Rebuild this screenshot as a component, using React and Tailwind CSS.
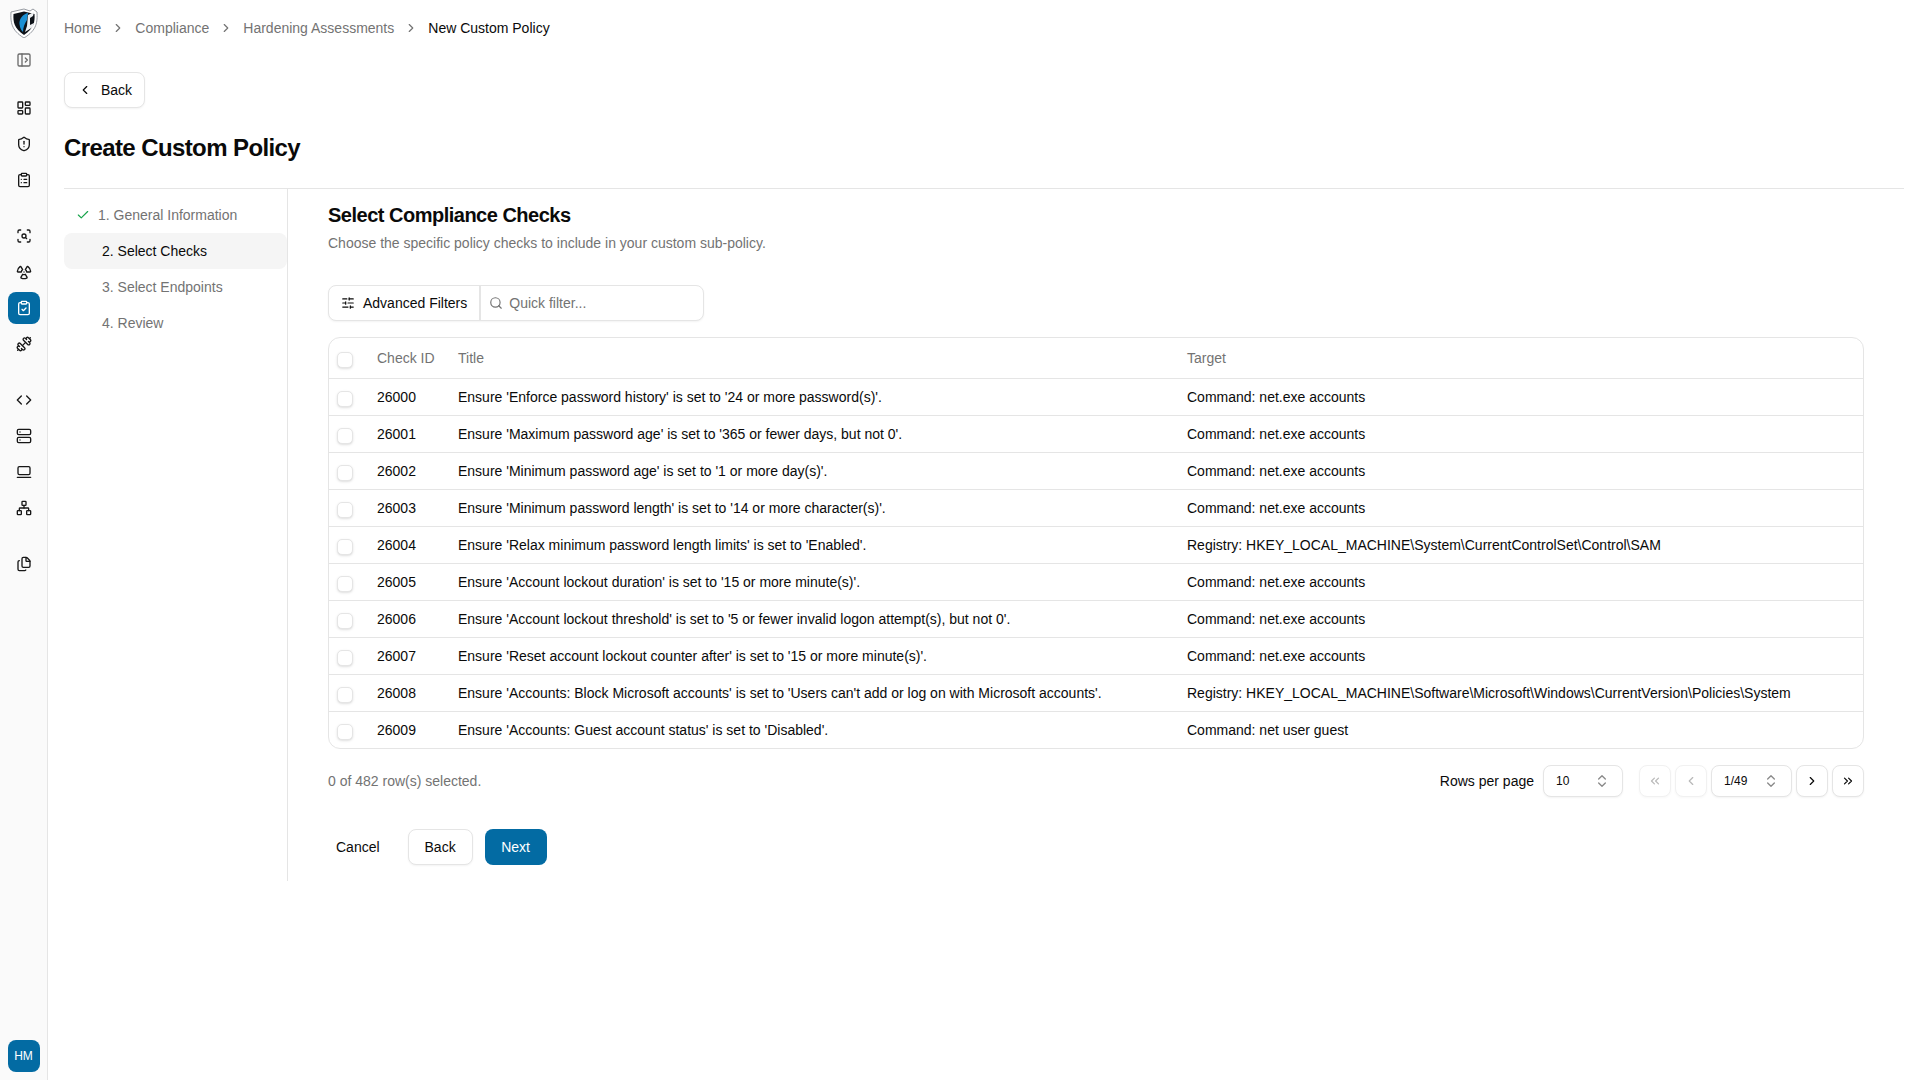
import React from "react";
import {
  Check,
  ChevronLeft,
  ChevronRight,
  ChevronsLeft,
  ChevronsRight,
  ChevronsUpDown,
  ClipboardCheck,
  ClipboardList,
  Code,
  Dumbbell,
  Files,
  LaptopMinimal,
  LayoutDashboard,
  Network,
  PanelLeftOpen,
  Radiation,
  ScanSearch,
  Search,
  Server,
  ShieldAlert,
  SlidersHorizontal,
} from "lucide-react";

const checks = [
  ["26000", "Ensure 'Enforce password history' is set to '24 or more password(s)'.", "Command: net.exe accounts"],
  ["26001", "Ensure 'Maximum password age' is set to '365 or fewer days, but not 0'.", "Command: net.exe accounts"],
  ["26002", "Ensure 'Minimum password age' is set to '1 or more day(s)'.", "Command: net.exe accounts"],
  ["26003", "Ensure 'Minimum password length' is set to '14 or more character(s)'.", "Command: net.exe accounts"],
  ["26004", "Ensure 'Relax minimum password length limits' is set to 'Enabled'.", "Registry: HKEY_LOCAL_MACHINE\\System\\CurrentControlSet\\Control\\SAM"],
  ["26005", "Ensure 'Account lockout duration' is set to '15 or more minute(s)'.", "Command: net.exe accounts"],
  ["26006", "Ensure 'Account lockout threshold' is set to '5 or fewer invalid logon attempt(s), but not 0'.", "Command: net.exe accounts"],
  ["26007", "Ensure 'Reset account lockout counter after' is set to '15 or more minute(s)'.", "Command: net.exe accounts"],
  ["26008", "Ensure 'Accounts: Block Microsoft accounts' is set to 'Users can't add or log on with Microsoft accounts'.", "Registry: HKEY_LOCAL_MACHINE\\Software\\Microsoft\\Windows\\CurrentVersion\\Policies\\System"],
  ["26009", "Ensure 'Accounts: Guest account status' is set to 'Disabled'.", "Command: net user guest"],
];

const Logo = () => (
  <svg width="28" height="30" viewBox="0 0 28 30">
    <path d="M1 4 L14 1 L20 3 L23 1 L27 4 C27.5 14 27 22 14 30 C1 22 .5 14 1 4 Z" fill="#fff" stroke="#7c828a" strokeWidth=".8" />
    <path d="M3.5 6 L14 3.5 L24.5 6 C25 14 24 20.5 14 27 C4 20.5 3 14 3.5 6 Z" fill="#0d1218" />
    <path d="M18 5 C13 6 9 11 9.5 16 C10 20 11 22 13 24 C13 19 15 15 17 12 Z" fill="#1b8fd2" />
    <path d="M18 7 L24 4 L23 8 L20 10 L20 17 L24 15 L23 19 L15 24 L17 18 Z" fill="#eef0f2" />
  </svg>
);

const NavIcon = ({ icon: Icon, active, className }) => (
  <div className={`flex size-8 items-center justify-center rounded-lg ${active ? "bg-[#036ba3] text-white" : "text-[#171717]"} ${className || ""}`}>
    <Icon size={16} strokeWidth={2} />
  </div>
);

const Sidebar = () => (
  <aside className="flex min-h-[1080px] w-12 shrink-0 flex-col items-center border-r border-[#e5e5e5] bg-[#fafafa] pt-2 pb-2">
    <Logo />
    <div className="mt-[6px] flex size-8 items-center justify-center text-[#6b6b6b]">
      <PanelLeftOpen size={16} />
    </div>
    <div className="mt-4 flex flex-col gap-1">
      <NavIcon icon={LayoutDashboard} />
      <NavIcon icon={ShieldAlert} />
      <NavIcon icon={ClipboardList} />
    </div>
    <div className="mt-6 flex flex-col gap-1">
      <NavIcon icon={ScanSearch} />
      <NavIcon icon={Radiation} />
      <NavIcon icon={ClipboardCheck} active />
      <NavIcon icon={Dumbbell} />
    </div>
    <div className="mt-6 flex flex-col gap-1">
      <NavIcon icon={Code} />
      <NavIcon icon={Server} />
      <NavIcon icon={LaptopMinimal} />
      <NavIcon icon={Network} />
    </div>
    <NavIcon icon={Files} className="mt-6" />
    <div className="mt-auto flex size-8 items-center justify-center rounded-lg bg-[#036ba3] text-xs text-white">HM</div>
  </aside>
);

const Breadcrumbs = () => (
  <div className="flex h-14 items-center gap-[10px] text-sm text-[#737373]">
    <span>Home</span>
    <ChevronRight size={14} />
    <span>Compliance</span>
    <ChevronRight size={14} />
    <span>Hardening Assessments</span>
    <ChevronRight size={14} />
    <span className="text-[#0a0a0a]">New Custom Policy</span>
  </div>
);

const Steps = () => (
  <nav className="flex w-[224px] shrink-0 flex-col border-r border-[#e5e5e5] pt-2 text-sm text-[#737373]">
    <div className="flex h-9 items-center pl-3">
      <Check size={14} className="mr-2 text-[#16a34a]" />
      1. General Information
    </div>
    <div className="flex h-9 items-center rounded-lg bg-[#f5f5f5] pl-[38px] text-[#0a0a0a]">2. Select Checks</div>
    <div className="flex h-9 items-center pl-[38px]">3. Select Endpoints</div>
    <div className="flex h-9 items-center pl-[38px]">4. Review</div>
  </nav>
);

const Checkbox = () => (
  <div className="size-4 translate-y-[2px] rounded-[5px] border border-[#e5e5e5] bg-white shadow-sm" />
);

const PageButton = ({ icon: Icon, disabled }) => (
  <button type="button" className={`flex size-8 items-center justify-center rounded-lg border border-[#e5e5e5] bg-white shadow-xs ${disabled ? "text-[#737373] opacity-50" : "text-[#0a0a0a]"}`}>
    <Icon size={14} />
  </button>
);

const SelectBox = ({ value, className }) => (
  <div className={`flex h-8 items-center justify-between rounded-lg border border-[#e5e5e5] bg-white px-3 text-xs shadow-xs ${className}`}>
    {value}
    <ChevronsUpDown size={16} className="text-[#8a8a8a]" />
  </div>
);

const ChecksTable = () => (
  <div className="mt-4 overflow-hidden rounded-xl border border-[#e5e5e5]">
    <table className="w-full table-fixed border-collapse text-sm text-[#0a0a0a]">
      <colgroup>
        <col className="w-[48px]" />
        <col className="w-[81px]" />
        <col className="w-[729px]" />
        <col />
      </colgroup>
      <thead>
        <tr className="h-[40px] text-left text-[#737373]">
          <th className="pl-2 font-normal"><Checkbox /></th>
          <th className="font-normal">Check ID</th>
          <th className="font-normal">Title</th>
          <th className="font-normal">Target</th>
        </tr>
      </thead>
      <tbody>
        {checks.map((row) => (
          <tr key={row[0]} className="h-[37px] border-t border-[#e5e5e5]">
            <td className="pl-2"><Checkbox /></td>
            <td>{row[0]}</td>
            <td>{row[1]}</td>
            <td>{row[2]}</td>
          </tr>
        ))}
      </tbody>
    </table>
  </div>
);

export default function App() {
  return (
    <div className="flex min-h-[1080px] bg-white font-['Liberation_Sans',Arial,sans-serif] text-[#0a0a0a]">
      <Sidebar />
      <main className="mr-4 min-w-0 flex-1 pl-4">
        <Breadcrumbs />
        <button type="button" className="mt-4 flex h-9 w-[81px] items-center gap-[9px] rounded-lg border border-[#e5e5e5] bg-white pl-[13px] text-sm shadow-xs">
          <ChevronLeft size={14} />
          Back
        </button>
        <h1 className="mt-6 text-2xl font-bold tracking-tight">Create Custom Policy</h1>
        <div className="mt-6 flex border-t border-[#e5e5e5]">
          <Steps />
          <section className="min-w-0 flex-1 pt-3 pr-10 pb-4 pl-10">
            <h2 className="text-xl font-bold tracking-tight">Select Compliance Checks</h2>
            <p className="mt-1 text-sm text-[#737373]">Choose the specific policy checks to include in your custom sub-policy.</p>
            <div className="mt-8 flex h-9 w-[376px] rounded-lg border border-[#e5e5e5] bg-white text-sm shadow-xs">
              <button type="button" className="flex items-center gap-2 border-r-2 border-[#e5e5e5] px-3">
                <SlidersHorizontal size={14} />
                Advanced Filters
              </button>
              <div className="flex flex-1 items-center gap-[6px] pl-2 text-[#737373]">
                <Search size={14} />
                Quick filter...
              </div>
            </div>
            <ChecksTable />
            <div className="mt-4 flex h-8 items-center justify-between">
              <span className="text-sm text-[#737373]">0 of 482 row(s) selected.</span>
              <div className="flex items-center">
                <span className="mr-[9px] text-sm">Rows per page</span>
                <SelectBox value="10" className="w-[80px]" />
                <div className="ml-4 flex items-center gap-1">
                  <PageButton icon={ChevronsLeft} disabled />
                  <PageButton icon={ChevronLeft} disabled />
                  <SelectBox value="1/49" className="w-[81px]" />
                  <PageButton icon={ChevronRight} />
                  <PageButton icon={ChevronsRight} />
                </div>
              </div>
            </div>
            <div className="mt-8 flex items-center text-sm">
              <button type="button" className="h-9 px-2">Cancel</button>
              <button type="button" className="ml-5 h-9 w-[65px] rounded-lg border border-[#e5e5e5] bg-white shadow-xs">Back</button>
              <button type="button" className="ml-3 h-9 w-[62px] rounded-lg bg-[#036ba3] text-white">Next</button>
            </div>
          </section>
        </div>
      </main>
    </div>
  );
}
